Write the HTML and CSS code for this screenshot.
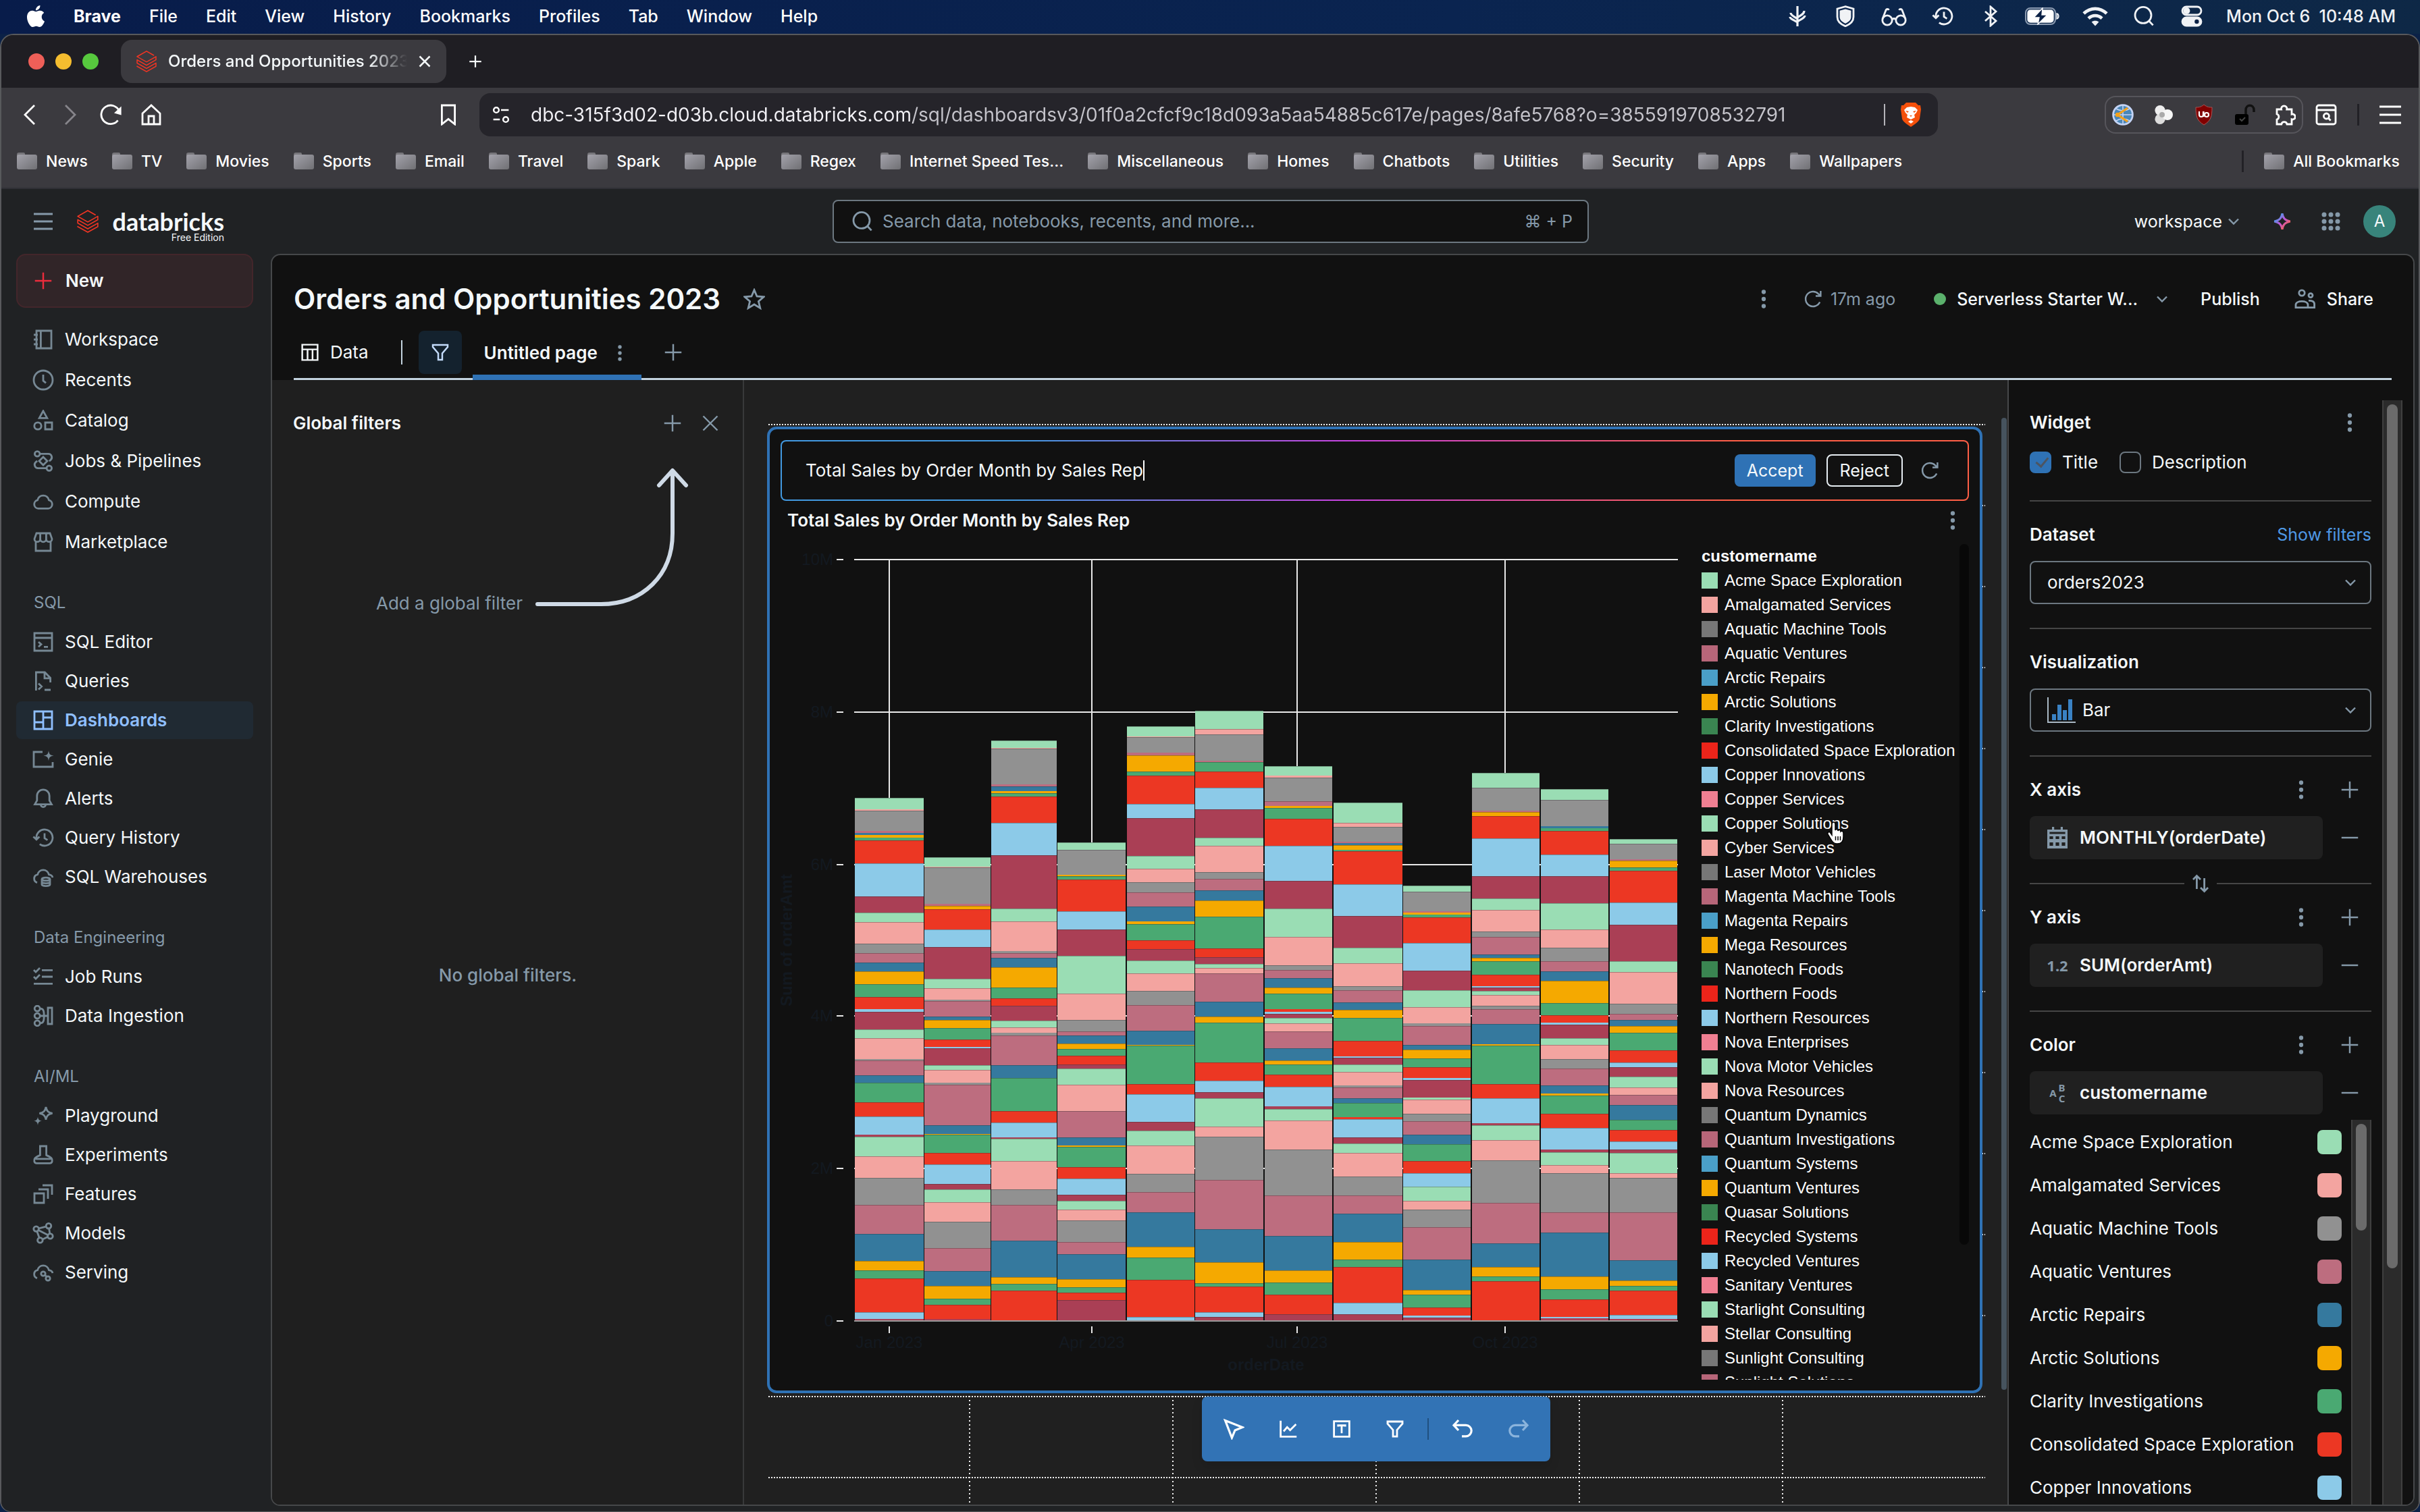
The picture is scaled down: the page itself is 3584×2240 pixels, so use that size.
FILE: index.html
```html
<!DOCTYPE html>
<html lang="en">
<head>
<meta charset="utf-8">
<title>Orders and Opportunities 2023</title>
<link rel="stylesheet" href="styles.css">
</head>
<body>
<svg class="sprite" aria-hidden="true">
  <defs>
    <linearGradient id="folderFill" x1="0" y1="0" x2="1" y2="1"><stop offset="0" stop-color="#a3a2ab"/><stop offset="1" stop-color="#707074"/></linearGradient>
    <linearGradient id="sparkFill" x1="0" y1="0" x2="1" y2="1"><stop offset="0.2" stop-color="#4a9be8"/><stop offset="0.5" stop-color="#c252d8"/><stop offset="0.8" stop-color="#f5655a"/></linearGradient>
    <symbol id="databricks" viewBox="0 0 24 24"><path fill="#ee3524" d="M.95 14.184L12 20.403l9.919-5.55v2.21L12 22.662l-10.484-5.96-.565.308v.77L12 24l11.05-6.218v-4.317l-.515-.309L12 19.118l-9.867-5.653v-2.21L12 16.805l11.05-6.218V6.32l-.515-.308L12 11.974 2.647 6.681 12 1.388l7.76 4.368.668-.411v-.566L12 0 .95 6.27v.72L12 13.207l9.919-5.55v2.26L12 15.52 1.516 9.56l-.565.308Z"/></symbol>
    <symbol id="folder" viewBox="0 0 30 26"><path d="M0 3a3 3 0 0 1 3-3h7a2 2 0 0 1 2 2v3H0z" fill="#77767b"/><rect y="3" width="30" height="22" rx="3" fill="url(#folderFill)"/></symbol>
    <symbol id="plus" viewBox="0 0 16 16"><path d="M8 1v14M1 8h14"/></symbol>
    <symbol id="minus" viewBox="0 0 16 16"><path d="M1 8h14"/></symbol>
    <symbol id="close" viewBox="0 0 16 16"><path d="M2 2l12 12M14 2L2 14"/></symbol>
    <symbol id="chevron" viewBox="0 0 16 16"><path d="M4 6l4 4 4-4"/></symbol>
    <symbol id="kebab" viewBox="0 0 16 16"><g fill="currentColor" stroke="none"><circle cx="8" cy="2" r="1.8"/><circle cx="8" cy="8" r="1.8"/><circle cx="8" cy="14" r="1.8"/></g></symbol>
    <symbol id="refresh" viewBox="0 0 16 16"><path d="M13.8 10.6A6.3 6.3 0 1 1 12.6 3.6L14.3 5.2M14.5 1.2v4.2h-4.2"/></symbol>
    <symbol id="funnel" viewBox="0 0 16 16"><path d="M1.7 1.7h12.6v1.8L9.7 8.8v5.5H6.3V8.8L1.7 3.5z"/></symbol>
    <symbol id="search" viewBox="0 0 16 16"><circle cx="7.5" cy="7.2" r="6"/><path d="M11.8 11.5l3 3.2"/></symbol>
    <symbol id="history" viewBox="0 0 16 16"><path d="M3 8.6a6 6 0 1 1 2.4 4.2M.7 7.2L3 9.4l2.2-2.2M9 4.8v3.6l2.2 1.4"/></symbol>
    <symbol id="sparkle" viewBox="0 0 16 16"><path d="M8 1.3C8.7 5.2 10 7 14.7 8 10 9 8.7 10.8 8 14.7 7.3 10.8 6 9 1.3 8 6 7 7.3 5.200 8 1.300z"/></symbol>
    <symbol id="notebook" viewBox="0 0 16 16"><path d="M3 1.500h11v13H3zM6.200 1.500v13M1 4.500h3M1 8h3M1 11.500h3"/></symbol>
    <symbol id="clock" viewBox="0 0 16 16"><circle cx="8" cy="8" r="7"/><path d="M8 4v4.500l2 1.700"/></symbol>
    <symbol id="shapes" viewBox="0 0 16 16"><path d="M8 .9l2.900 5.300H5.100zM9.500 9.500h5v5h-5z"/><circle cx="4" cy="12" r="2.600"/></symbol>
    <symbol id="pipeline" viewBox="0 0 16 16"><circle cx="3.600" cy="2.700" r="1.900"/><circle cx="12.400" cy="13.300" r="1.900"/><path d="M5.500 2.700h6a2.600 2.600 0 0 1 1.900 4.600l-1 .8M10.500 13.300h-6a2.600 2.600 0 0 1-1.900-4.600l1-.8M8 5l3 3-3 3-3-3z"/></symbol>
    <symbol id="cloud" viewBox="0 0 16 16"><path d="M4.300 13.200a3.200 3.200 0 0 1-.5-6.300 4.300 4.300 0 0 1 8.400 0 3.200 3.200 0 0 1-.5 6.300z"/></symbol>
    <symbol id="store" viewBox="0 0 16 16"><path d="M2.500 8v6.500h11V8M3 1.500h10l1.500 4.200a2.100 2.100 0 0 1-4.300 0 2.200 2.200 0 0 1-4.400 0 2.100 2.100 0 0 1-4.300 0zM5.800 1.500v4.200M10.200 1.500v4.200"/></symbol>
    <symbol id="editor" viewBox="0 0 16 16"><path d="M1.500 1.500h13v13h-13zM1.500 5h13M4.500 8l2 1.800-2 1.800M8.500 11.700h3"/></symbol>
    <symbol id="query" viewBox="0 0 16 16"><path d="M2.700 15V1.500h6.500l4.100 4.200V9M9 1.500v4.400h4.300M4.500 9.800l2.300 2.200-2.300 2.200M9 14.500h4.500"/></symbol>
    <symbol id="board" viewBox="0 0 16 16"><path d="M1.500 1.500h13v13h-13zM8 1.500v13M1.500 9.500H8M8 6h6.500"/></symbol>
    <symbol id="genie" viewBox="0 0 16 16"><path d="M7.500 2.500H1v11h14v-3.500"/><path fill="currentColor" stroke="none" d="M12 1.500c.4 2.700 1 3.300 3.800 3.800-2.800.5-3.400 1.100-3.800 3.800-.4-2.700-1-3.300-3.800-3.800 2.800-.5 3.400-1.100 3.800-3.800z"/></symbol>
    <symbol id="bell" viewBox="0 0 16 16"><path d="M1.800 12.300h12.400L12.600 9.500V6a4.600 4.600 0 0 0-9.200 0v3.500zM6.200 12.500a1.800 1.800 0 0 0 3.600 0"/></symbol>
    <symbol id="warehouse" viewBox="0 0 16 16"><path d="M3.500 12.300a3.100 3.100 0 0 1 .3-6 4.300 4.300 0 0 1 8.400 0c1.500.2 2.600 1 2.700 2.300M7 9.800v4c0 1.300 6 1.300 6 0v-4M7 11.800c0 1.300 6 1.300 6 0"/><ellipse cx="10" cy="9.700" rx="3" ry="1.100"/></symbol>
    <symbol id="checklist" viewBox="0 0 16 16"><path d="M7 3.200h8M7 8h8M1 13.200h14M1 3l1.500 1.500L5.500 1.500M1 8l1.500 1.500 3-3"/></symbol>
    <symbol id="ingest" viewBox="0 0 16 16"><circle cx="3.600" cy="2.600" r="2"/><circle cx="3.600" cy="8" r="2"/><circle cx="3.600" cy="13.400" r="2"/><path d="M5.600 2.600c2.500 0 3 1.500 3 5.400s-.5 5.400-3 5.400M5.600 8h5.900M11.500 8V2h3v12h-3z"/></symbol>
    <symbol id="sparkles" viewBox="0 0 16 16"><path d="M10 1.500c.6 3 1.600 4.100 4.800 4.700-3.200.6-4.200 1.700-4.800 4.700-.6-3-1.600-4.100-4.800-4.700C8.400 5.600 9.400 4.500 10 1.500z"/><path fill="currentColor" stroke="none" d="M4 8.700c.3 2 .9 2.700 3 3.100-2.100.4-2.700 1.100-3 3.200-.3-2.100-.9-2.800-3-3.200 2.100-.4 2.700-1.100 3-3.100z"/></symbol>
    <symbol id="flask" viewBox="0 0 16 16"><path d="M5.700 1.500h4.600v6.700c3.900 1.700 4.700 2.600 4.300 4.600-.2 1-.9 1.400-1.800 1.400H3.200c-.9 0-1.600-.4-1.800-1.400-.4-2 .4-2.900 4.300-4.600zM2.200 10.900h11.600"/></symbol>
    <symbol id="layers" viewBox="0 0 16 16"><path d="M1.500 7.500h7v7h-7zM4.500 4.500h7v7M7.500 1.500h7v7"/></symbol>
    <symbol id="graph" viewBox="0 0 16 16"><circle cx="2.800" cy="4.800" r="1.900"/><circle cx="12" cy="2.600" r="1.900"/><circle cx="13.200" cy="10.200" r="1.900"/><circle cx="5.700" cy="13.200" r="1.900"/><path d="M4.700 4.400l5.400-1.300M12.300 4.500l.6 3.800M11.300 10.800l-3.700 1.700M3.400 6.600l1.700 4.800M4.500 5.700l7.100 3.700"/></symbol>
    <symbol id="serving" viewBox="0 0 16 16"><path d="M3.500 12.300a3.100 3.100 0 0 1 .3-6 4.300 4.300 0 0 1 8.400 0c1.500.2 2.600 1 2.700 2.300M9.300 10l1.200 1.200"/><circle cx="8" cy="9" r="1.600"/><circle cx="11.500" cy="12.500" r="1.600"/></symbol>
    <symbol id="table" viewBox="0 0 16 16"><path d="M1.500 1.500h13v13h-13zM1.500 5.500h13M6 5.500v9M10.200 5.500v9"/></symbol>
    <symbol id="star" viewBox="0 0 16 16"><path d="M8 1.300l2 4.700 5 .4-3.800 3.300 1.200 5L8 12l-4.400 2.700 1.200-5L1 6.400 6 6z"/></symbol>
    <symbol id="people" viewBox="0 0 16 16"><circle cx="5.500" cy="3.500" r="2.100"/><circle cx="12" cy="5.300" r="1.500"/><path d="M1 14.300v-2c0-3.500 9-3.500 9 0v2zM10.500 9.200c2.200-.2 4.300.6 4.300 2.600v2.500H10"/></symbol>
    <symbol id="calendar" viewBox="0 0 16 16"><path fill="currentColor" stroke="none" fill-rule="evenodd" d="M4 0h1.600v2h4.800V0H12v2h3.500v14H.5V2H4zM2.200 7v2h2.600V7zm4.500 0v2h2.600V7zm4.500 0v2h2.600V7zm-9 4.500v2.500h2.600v-2.500zm4.500 0v2.500h2.600v-2.500zm4.500 0v2.500h2.600v-2.500zM2.200 3.700v1.600h11.600V3.700z"/></symbol>
    <symbol id="swap" viewBox="0 0 16 16"><path d="M5.200 12V2.300M2.500 5l2.700-2.800L8 5M10.800 4v9.700M8 11l2.800 2.800L13.500 11"/></symbol>
    <symbol id="puzzle" viewBox="0 0 16 16"><path d="M2 4h3.300a2.100 2.100 0 1 1 4.100 0H13v3.600a2 2 0 1 1 0 3.800V15H9.500a2.100 2.100 0 0 0-4.100 0H2v-3.500a2.100 2.100 0 0 0 0-4z"/></symbol>
  </defs>
</svg>

<header class="menubar">
  <nav class="menus">
    <svg class="apple" viewBox="0 0 24 24"><path fill="#fff" d="M12.152 6.896c-.948 0-2.415-1.078-3.960-1.040-2.040.027-3.910 1.183-4.961 3.014-2.117 3.675-.546 9.103 1.519 12.090 1.013 1.454 2.208 3.090 3.792 3.039 1.520-.065 2.090-.987 3.935-.987 1.831 0 2.350.987 3.960.948 1.637-.026 2.676-1.480 3.676-2.948 1.156-1.688 1.636-3.325 1.662-3.415-.039-.013-3.182-1.221-3.220-4.857-.026-3.040 2.480-4.494 2.597-4.559-1.429-2.090-3.623-2.324-4.390-2.376-2-.156-3.675 1.090-4.610 1.090zM15.530 3.830c.843-1.012 1.400-2.427 1.245-3.830-1.207.052-2.662.805-3.532 1.818-.780.896-1.454 2.338-1.273 3.714 1.338.104 2.715-.688 3.559-1.701"/></svg>
    <b>Brave</b><span>File</span><span>Edit</span><span>View</span><span>History</span><span>Bookmarks</span><span>Profiles</span><span>Tab</span><span>Window</span><span>Help</span>
  </nav>
  <div class="status">
    <svg class="icon" viewBox="0 0 16 16"><path stroke-width="1.600" d="M8 .5v15M3 5.500c0 2 2.500 2.500 5 4.500M13 4c0 2.500-2.500 3-5 5M2.500 8.500c0 1.700 3 2.200 5.500 4M13.500 7.500c0 2-3 2.500-5.500 4.500"/></svg>
    <svg class="icon" viewBox="0 0 16 16"><path d="M8 .8l6 1.700v6c0 3.500-3 5.700-6 6.900-3-1.200-6-3.400-6-6.900v-6z"/><path fill="currentColor" stroke="none" d="M8 2.800l4.200 1.100v4.600c0 2.400-2 3.900-4.200 4.900-2.200-1-4.200-2.500-4.200-4.900V3.900z"/></svg>
    <svg class="icon wide" viewBox="0 0 20 16"><circle cx="5" cy="11" r="3.600"/><circle cx="15" cy="11" r="3.600"/><path d="M8.600 10.500c.6-1 2.200-1 2.800 0M1.500 10L4 3.500c.5-1 1.800-1 2.200 0M18.500 10L16 3.500c-.5-1-1.800-1-2.200 0"/></svg>
    <svg class="icon"><use href="#history"/></svg>
    <svg class="icon" viewBox="0 0 16 16"><path d="M4 4.500l8 7-4 3.500V1l4 3.500-8 7"/></svg>
    <svg class="battery" viewBox="0 0 52 26"><rect x="1" y="1" width="44" height="24" rx="7" fill="none" stroke="#8b9ab0" stroke-width="2"/><rect x="4" y="4" width="38" height="18" rx="4" fill="#fff"/><path d="M47 9c4 1 4 7 0 8z" fill="#8b9ab0"/><path d="M26 1L13 15h8l-2 10 14-14h-8z" fill="#0c2246" stroke="#fff"/></svg>
    <svg class="icon wide" viewBox="0 0 20 16"><g fill="none" stroke-width="2.400"><path d="M1.500 6c5-4.800 12-4.800 17 0M5 9.600c3-2.700 7-2.700 10 0"/></g><path fill="currentColor" stroke="none" d="M10 15.300l-2.700-3c1.500-1.300 3.900-1.300 5.400 0z"/></svg>
    <svg class="icon"><use href="#search"/></svg>
    <svg class="icon" viewBox="0 0 16 16"><rect x="1" y="1" width="14" height="6" rx="3"/><circle cx="4.200" cy="4" r="1.800" fill="currentColor"/><rect x="1" y="9" width="14" height="6" rx="3" fill="currentColor"/><circle cx="11.700" cy="12" r="1.600" fill="#0c2246" stroke="none"/></svg>
    <time>Mon Oct 6&nbsp; 10:48 AM</time>
  </div>
</header>

<div class="window">
  <div class="tabstrip">
    <div class="lights"><i class="red"></i><i class="yellow"></i><i class="green"></i></div>
    <div class="browser-tab"><svg class="favicon"><use href="#databricks"/></svg><span class="tab-title">Orders and Opportunities 2023</span><svg class="tiny-x"><use href="#close"/></svg></div>
    <button class="bare new-tab" aria-label="New tab"><svg class="glyph20"><use href="#plus"/></svg></button>
  </div>
  <div class="toolbar">
    <div class="nav-buttons">
      <button class="bare" aria-label="Back"><svg class="icon" viewBox="0 0 16 16"><path d="M11.500 1L4.500 8l7 7"/></svg></button>
      <button class="bare dim" aria-label="Forward"><svg class="icon" viewBox="0 0 16 16"><path d="M4.500 1l7 7-7 7"/></svg></button>
      <button class="bare" aria-label="Reload"><svg class="icon" viewBox="0 0 16 16"><path d="M13.300 12.200A6.900 6.900 0 1 1 14.300 5.400"/><path fill="currentColor" stroke="none" d="M15.800 1.800v6.400L10.500 6.800z"/></svg></button>
      <button class="bare" aria-label="Home"><svg class="icon" viewBox="0 0 16 16"><path d="M1.500 7L8 1l6.500 6v8h-13zM6 15V9h4v6"/></svg></button>
    </div>
    <button class="bare mark" aria-label="Bookmark"><svg class="icon" viewBox="0 0 16 16"><path d="M3.200 1h9.600v14L8 11.200 3.200 15z"/></svg></button>
    <div class="urlbar">
      <svg class="glyph28" viewBox="0 0 16 16"><circle cx="4" cy="4" r="2.200"/><path d="M8 4h6.500M1.500 12H7"/><circle cx="12" cy="12" r="2.200"/></svg>
      <input class="url" aria-label="Address" value="dbc-315f3d02-d03b.cloud.databricks.com/sql/dashboardsv3/01f0a2cfcf9c18d093a5aa54885c617e/pages/8afe5768?o=3855919708532791">
      <i class="url-rule"></i>
      <svg class="brave" viewBox="0 0 32 36"><path fill="#f4500b" d="M9 0h14l4 4 3 0 1 6-2 14c-1 4-7 8-13 12C10 32 4 28 3 24L1 10l1-6 3 0z"/><path fill="#fff" d="M16 6l6 1 4 4-2 4-3 3 1 4-6 3-6-3 1-4-3-3-2-4 4-4zM16 26l4 2-4 3-4-3z"/><path fill="#f4500b" d="M8 12l5 1-2 2zM24 12l-5 1 2 2zM14 19h4l-2 2z"/></svg>
    </div>
    <div class="extensions">
      <svg class="glyph32" viewBox="0 0 16 16"><circle cx="8" cy="8" r="7.200" fill="#4b87b8" stroke="#c4d4f5"/><path d="M8 1v14M1 8h14M3 3.500c3 2 7 2 10 0M3 12.500c3-2 7-2 10 0" stroke="#c4d4f5" stroke-width=".8"/><path d="M11.500 3L4 8l7.500 5" stroke="#f5a21b" stroke-width="1.600"/><circle cx="4" cy="8" r="1.600" fill="#f5a21b" stroke="none"/></svg>
      <svg class="glyph32" viewBox="0 0 16 16"><g stroke="none"><circle cx="5.500" cy="4.800" r="3.800" fill="#eee"/><circle cx="5.500" cy="11.200" r="3.800" fill="#ddd"/><circle cx="11" cy="8" r="4" fill="#f6f6f6"/><circle cx="7" cy="8" r="2" fill="#aaa"/></g></svg>
      <svg class="glyph32" viewBox="0 0 32 32"><path fill="#800000" stroke="#a55" stroke-width="1" d="M16 1c5 4 8 4 12 4 0 14-2 20-12 26C6 25 4 19 4 5c4 0 7 0 12-4z"/><path stroke="#fff" stroke-width="2.200" d="M9 11v5a3 3 0 0 0 6 0v-5M15.500 11v8"/><circle cx="20" cy="16" r="3" stroke="#fff" stroke-width="2.200"/></svg>
      <svg class="glyph32" viewBox="0 0 32 32"><rect x="2" y="15" width="20" height="16" rx="3" fill="#000" stroke="none"/><path stroke="#111" stroke-width="3.500" d="M18 15V9c0-9 12-9 12 0v3"/><path stroke="#444" stroke-width="2" d="M9 22l3 3 5-5"/></svg>
      <svg class="glyph32"><use href="#puzzle"/></svg>
    </div>
    <svg class="glyph32 sidepanel" viewBox="0 0 16 16"><rect x="1" y="1" width="14" height="14" rx="1.500"/><path d="M1 4.500h14"/><circle cx="8.200" cy="9" r="2"/><path d="M9.700 10.500l1.600 1.800"/></svg>
    <i class="bar-rule"></i>
    <button class="bare" aria-label="Menu"><svg class="glyph32" viewBox="0 0 16 16"><path d="M0 2h16M0 8h16M0 14h16"/></svg></button>
  </div>
  <nav class="bookmarks">
    <a href="#"><svg class="folder"><use href="#folder"/></svg>News</a>
    <a href="#"><svg class="folder"><use href="#folder"/></svg>TV</a>
    <a href="#"><svg class="folder"><use href="#folder"/></svg>Movies</a>
    <a href="#"><svg class="folder"><use href="#folder"/></svg>Sports</a>
    <a href="#"><svg class="folder"><use href="#folder"/></svg>Email</a>
    <a href="#"><svg class="folder"><use href="#folder"/></svg>Travel</a>
    <a href="#"><svg class="folder"><use href="#folder"/></svg>Spark</a>
    <a href="#"><svg class="folder"><use href="#folder"/></svg>Apple</a>
    <a href="#"><svg class="folder"><use href="#folder"/></svg>Regex</a>
    <a href="#"><svg class="folder"><use href="#folder"/></svg>Internet Speed Tes...</a>
    <a href="#"><svg class="folder"><use href="#folder"/></svg>Miscellaneous</a>
    <a href="#"><svg class="folder"><use href="#folder"/></svg>Homes</a>
    <a href="#"><svg class="folder"><use href="#folder"/></svg>Chatbots</a>
    <a href="#"><svg class="folder"><use href="#folder"/></svg>Utilities</a>
    <a href="#"><svg class="folder"><use href="#folder"/></svg>Security</a>
    <a href="#"><svg class="folder"><use href="#folder"/></svg>Apps</a>
    <a href="#"><svg class="folder"><use href="#folder"/></svg>Wallpapers</a>
    <i class="bar-rule push"></i>
    <a href="#"><svg class="folder"><use href="#folder"/></svg>All Bookmarks</a>
  </nav>

  <div class="app">
    <header class="topbar">
      <div class="brand">
        <button class="bare muted" aria-label="Toggle menu"><svg class="burger" viewBox="0 0 28 26"><path stroke-width="3" d="M0 2h28M0 13h28M0 24h28"/></svg></button>
        <svg class="logo"><use href="#databricks"/></svg>
        <div class="wordmark"><span>databricks</span><small>Free Edition</small></div>
      </div>
      <label class="search"><svg class="icon"><use href="#search"/></svg><input type="search" placeholder="Search data, notebooks, recents, and more..." aria-label="Search"><kbd>⌘ + P</kbd></label>
      <div class="account">
        <button class="bare workspace">workspace<svg class="glyph28 muted"><use href="#chevron"/></svg></button>
        <svg class="glyph28 assistant"><use href="#sparkle"/></svg>
        <svg class="glyph28 muted" viewBox="0 0 28 28"><g fill="currentColor" stroke="none"><circle cx="4" cy="4" r="3.500"/><circle cx="14" cy="4" r="3.500"/><circle cx="24" cy="4" r="3.500"/><circle cx="4" cy="14" r="3.500"/><circle cx="14" cy="14" r="3.500"/><circle cx="24" cy="14" r="3.500"/><circle cx="4" cy="24" r="3.500"/><circle cx="14" cy="24" r="3.500"/><circle cx="24" cy="24" r="3.500"/></g></svg>
        <span class="avatar">A</span>
      </div>
    </header>

    <div class="body">
      <nav class="sidebar">
        <button class="new"><svg class="glyph28"><use href="#plus"/></svg>New</button>
        <div class="group roomy">
          <a href="#"><svg class="icon"><use href="#notebook"/></svg>Workspace</a>
          <a href="#"><svg class="icon"><use href="#clock"/></svg>Recents</a>
          <a href="#"><svg class="icon"><use href="#shapes"/></svg>Catalog</a>
          <a href="#"><svg class="icon"><use href="#pipeline"/></svg>Jobs &amp; Pipelines</a>
          <a href="#"><svg class="icon"><use href="#cloud"/></svg>Compute</a>
          <a href="#"><svg class="icon"><use href="#store"/></svg>Marketplace</a>
        </div>
        <div class="group">
          <h2>SQL</h2>
          <a href="#"><svg class="icon"><use href="#editor"/></svg>SQL Editor</a>
          <a href="#"><svg class="icon"><use href="#query"/></svg>Queries</a>
          <a href="#" class="current"><svg class="icon"><use href="#board"/></svg>Dashboards</a>
          <a href="#"><svg class="icon"><use href="#genie"/></svg>Genie</a>
          <a href="#"><svg class="icon"><use href="#bell"/></svg>Alerts</a>
          <a href="#"><svg class="icon"><use href="#history"/></svg>Query History</a>
          <a href="#"><svg class="icon"><use href="#warehouse"/></svg>SQL Warehouses</a>
        </div>
        <div class="group">
          <h2>Data Engineering</h2>
          <a href="#"><svg class="icon"><use href="#checklist"/></svg>Job Runs</a>
          <a href="#"><svg class="icon"><use href="#ingest"/></svg>Data Ingestion</a>
        </div>
        <div class="group">
          <h2>AI/ML</h2>
          <a href="#"><svg class="icon"><use href="#sparkles"/></svg>Playground</a>
          <a href="#"><svg class="icon"><use href="#flask"/></svg>Experiments</a>
          <a href="#"><svg class="icon"><use href="#layers"/></svg>Features</a>
          <a href="#"><svg class="icon"><use href="#graph"/></svg>Models</a>
          <a href="#"><svg class="icon"><use href="#serving"/></svg>Serving</a>
        </div>
      </nav>

      <main class="page">
        <div class="page-head">
          <div class="title-row">
            <h1>Orders and Opportunities 2023</h1>
            <svg class="icon muted"><use href="#star"/></svg>
            <div class="actions">
              <button class="bare muted" aria-label="More"><svg class="glyph28"><use href="#kebab"/></svg></button>
              <button class="bare muted refresh"><svg class="glyph28"><use href="#refresh"/></svg>17m ago</button>
              <button class="bare compute"><i></i>Serverless Starter W...<svg class="glyph28 muted"><use href="#chevron"/></svg></button>
              <button class="bare">Publish</button>
              <button class="bare share"><svg class="icon muted"><use href="#people"/></svg>Share</button>
            </div>
          </div>
          <div class="tabs">
            <button class="bare data-tab"><svg class="glyph28"><use href="#table"/></svg>Data</button>
            <i class="tab-rule"></i>
            <button class="bare filter-tab" aria-label="Global filters"><svg class="glyph28"><use href="#funnel"/></svg></button>
            <button class="bare page-tab">Untitled page<svg class="glyph24 muted"><use href="#kebab"/></svg></button>
            <button class="bare muted add-tab" aria-label="Add page"><svg class="glyph28"><use href="#plus"/></svg></button>
          </div>
        </div>

        <div class="panes">
          <aside class="filters">
            <div class="filters-head"><h2>Global filters</h2><button class="bare muted" aria-label="Add filter"><svg class="glyph28"><use href="#plus"/></svg></button><button class="bare muted" aria-label="Close"><svg class="glyph28"><use href="#close"/></svg></button></div>
            <div class="hint"><span>Add a global filter</span><svg viewBox="0 0 230 210"><path d="M4 203H98C160 203 204 160 204 98V6M184 27L204 5 224 27"/></svg></div>
            <p>No global filters.</p>
          </aside>

          <section class="canvas">
            <svg class="grid"><defs><pattern id="cells" x="32" y="65" width="301" height="120" patternUnits="userSpaceOnUse"><path d="M0 1H301" stroke-dasharray="2 2"/><path d="M1 0V120" stroke-dasharray="2 4"/></pattern></defs><rect x="34" y="65" width="1804" height="100%" fill="url(#cells)"/></svg>
            <article class="widget">
              <form class="assist">
                <input class="prompt" aria-label="Title" value="Total Sales by Order Month by Sales Rep"><i class="caret"></i>
                <button type="button" class="accept">Accept</button>
                <button type="button" class="reject">Reject</button>
                <button type="button" class="bare muted" aria-label="Regenerate"><svg class="glyph28"><use href="#refresh"/></svg></button>
              </form>
              <div class="widget-title"><h3>Total Sales by Order Month by Sales Rep</h3><button class="bare muted" aria-label="Widget menu"><svg class="glyph28"><use href="#kebab"/></svg></button></div>
              <div class="viz">
                <svg id="chart" class="chart" viewBox="0 0 1364 1256"></svg>
                <div class="legend">
                  <h4>customername</h4>
                  <ul>
                    <li>Acme Space Exploration</li><li>Amalgamated Services</li><li>Aquatic Machine Tools</li><li>Aquatic Ventures</li><li>Arctic Repairs</li><li>Arctic Solutions</li><li>Clarity Investigations</li><li>Consolidated Space Exploration</li><li>Copper Innovations</li><li>Copper Services</li>
                    <li>Copper Solutions</li><li>Cyber Services</li><li>Laser Motor Vehicles</li><li>Magenta Machine Tools</li><li>Magenta Repairs</li><li>Mega Resources</li><li>Nanotech Foods</li><li>Northern Foods</li><li>Northern Resources</li><li>Nova Enterprises</li>
                    <li>Nova Motor Vehicles</li><li>Nova Resources</li><li>Quantum Dynamics</li><li>Quantum Investigations</li><li>Quantum Systems</li><li>Quantum Ventures</li><li>Quasar Solutions</li><li>Recycled Systems</li><li>Recycled Ventures</li><li>Sanitary Ventures</li>
                    <li>Starlight Consulting</li><li>Stellar Consulting</li><li>Sunlight Consulting</li><li>Sunlight Solutions</li>
                  </ul>
                  <i class="legend-scroll"></i>
                  <svg class="pointer" viewBox="0 0 30 36"><path fill="#fff" stroke="#000" stroke-width="1.500" d="M9 21V5c0-4 5-4 5 0v9c1-2 4-2 4 1 1-2 4-2 4 1 1-1 4-1 4 2v6c0 7-3 10-9 10-5 0-7-2-9-6l-5-8c-1-3 2-5 4-2z"/><path stroke="#000" stroke-width="1.500" d="M14.500 23v6M18 23v6M21.500 23v6"/></svg>
                </div>
              </div>
            </article>
            <i class="canvas-scroll"></i>
            <div class="dock">
              <button class="bare" aria-label="Select"><svg class="icon" viewBox="0 0 16 16"><path d="M1.800 1.800l12.700 5L9 9l-2.300 5.500z"/></svg></button>
              <button class="bare" aria-label="Add visualization"><svg class="glyph28" viewBox="0 0 16 16"><path d="M1.500 1v13.500H15M4 10l3-3.500 2.500 2.500L14.500 4"/></svg></button>
              <button class="bare" aria-label="Add text"><svg class="glyph28" viewBox="0 0 16 16"><path d="M1.500 1.500h13v13h-13zM5 6V5h6v1M8 5v6.500"/></svg></button>
              <button class="bare" aria-label="Add filter"><svg class="glyph28"><use href="#funnel"/></svg></button>
              <i></i>
              <button class="bare" aria-label="Undo"><svg class="icon" viewBox="0 0 16 16"><path d="M5 1.500L1.500 5.200 5 9M2 5.200h8.500a4 4 0 0 1 0 8.200H7.500"/></svg></button>
              <button class="bare faded" aria-label="Redo"><svg class="icon" viewBox="0 0 16 16"><path d="M11 1.500l3.500 3.700L11 9M14 5.200H5.500a4 4 0 0 0 0 8.200h3"/></svg></button>
            </div>
          </section>

          <aside class="config">
            <div class="config-main">
              <section>
                <div class="row"><h2>Widget</h2><button class="bare muted" aria-label="More"><svg class="glyph28"><use href="#kebab"/></svg></button></div>
                <div class="checks"><label><input type="checkbox" checked>Title</label><label><input type="checkbox">Description</label></div>
              </section>
              <section>
                <div class="row link-row"><h2>Dataset</h2><a href="#">Show filters</a></div>
                <div class="select"><select aria-label="Dataset"><option>orders2023</option></select><svg class="glyph28 muted"><use href="#chevron"/></svg></div>
              </section>
              <section>
                <div class="row"><h2>Visualization</h2></div>
                <div class="select with-icon"><svg class="bar-icon" viewBox="0 0 42 38"><path stroke="#a9b8c4" stroke-width="2" d="M1 0v37h41"/><path stroke="none" fill="#3a82c4" d="M7 25h6v9H7zM15 11h6v23h-6zM23 19h6v15h-6zM31 3h6v31h-6z"/></svg><select aria-label="Visualization"><option>Bar</option></select><svg class="glyph28 muted"><use href="#chevron"/></svg></div>
              </section>
              <section>
                <div class="row"><h2>X axis</h2><button class="bare muted" aria-label="More"><svg class="glyph28"><use href="#kebab"/></svg></button><button class="bare muted" aria-label="Add"><svg class="glyph28"><use href="#plus"/></svg></button></div>
                <div class="field"><button class="pill"><svg class="icon muted"><use href="#calendar"/></svg>MONTHLY(orderDate)</button><button class="bare muted" aria-label="Remove"><svg class="glyph28"><use href="#minus"/></svg></button></div>
                <span class="swap muted"><svg class="icon"><use href="#swap"/></svg></span>
              </section>
              <section>
                <div class="row"><h2>Y axis</h2><button class="bare muted" aria-label="More"><svg class="glyph28"><use href="#kebab"/></svg></button><button class="bare muted" aria-label="Add"><svg class="glyph28"><use href="#plus"/></svg></button></div>
                <div class="field"><button class="pill"><span class="num muted">1.2</span>SUM(orderAmt)</button><button class="bare muted" aria-label="Remove"><svg class="glyph28"><use href="#minus"/></svg></button></div>
              </section>
              <section class="last">
                <div class="row"><h2>Color</h2><button class="bare muted" aria-label="More"><svg class="glyph28"><use href="#kebab"/></svg></button><button class="bare muted" aria-label="Add"><svg class="glyph28"><use href="#plus"/></svg></button></div>
                <div class="field"><button class="pill"><span class="abc muted"><span>A</span><span>B</span><span>C</span></span>customername</button><button class="bare muted" aria-label="Remove"><svg class="glyph28"><use href="#minus"/></svg></button></div>
                <div class="colors">
                  <ul><li>Acme Space Exploration<i></i></li><li>Amalgamated Services<i></i></li><li>Aquatic Machine Tools<i></i></li><li>Aquatic Ventures<i></i></li><li>Arctic Repairs<i></i></li><li>Arctic Solutions<i></i></li><li>Clarity Investigations<i></i></li><li>Consolidated Space Exploration<i></i></li><li>Copper Innovations<i></i></li></ul>
                  <div class="track short"><i></i></div>
                </div>
              </section>
            </div>
            <div class="track"><i></i></div>
          </aside>
        </div>
      </main>
    </div>
  </div>
</div>
<script src="chart.js"></script>
</body>
</html>
```
FILE: styles.css
```css
* { box-sizing: border-box; }
body { margin: 0; height: 100vh; display: flex; flex-direction: column; overflow: hidden; background: #0b2147; color: #f4f8fa; font: 400 26px/32px Inter, "Noto Sans", sans-serif; }
h1, h2, h3, h4, p, ul { margin: 0; padding: 0; font-size: inherit; }
h1, h2, h3 { font-weight: 600; }
ul { list-style: none; }
a { color: inherit; text-decoration: none; }
i { display: block; flex: none; }
svg { display: block; flex: none; fill: none; stroke: currentColor; stroke-width: 1.4; }
button, input, select { font: inherit; color: inherit; }
input { border: 0; background: none; padding: 0; outline: 0; }
.bare { display: flex; align-items: center; border: 0; background: none; padding: 0; }
.sprite { position: absolute; width: 0; height: 0; }
.icon, .glyph32 { width: 32px; height: 32px; }
.glyph28 { width: 28px; height: 28px; }
.glyph24 { width: 24px; height: 24px; }
.glyph20 { width: 20px; height: 20px; }
.muted { color: #8599a9; }

/* System menu bar */
.menubar { flex: none; height: 50px; padding: 0 36px 2px; display: flex; justify-content: space-between; align-items: center; background: linear-gradient(90deg, #081c4a, #0a2450 60%, #0e2846); color: #fff; font-size: 25px; font-weight: 500; }
.menus { display: flex; align-items: center; gap: 42px; }
.menus b { font-weight: 700; }
.menus .apple { margin-right: -3px; }
.apple { width: 34px; height: 32px; stroke: none; }
.status { display: flex; align-items: center; gap: 39px; color: #f0f2f5; }
.wide { width: 40px; }
.status .wide { margin: 0 -3px; }
.battery { width: 52px; height: 26px; margin: 0 -4px; }
.status time { margin-left: -4px; }

/* Browser chrome */
.window { flex: 1; min-height: 0; display: flex; flex-direction: column; border: 2px solid #58595c; border-bottom-width: 1px; border-radius: 20px 20px 16px 16px; background: #202124; overflow: hidden; }
.tabstrip { flex: none; height: 78px; display: flex; align-items: center; background: #1f1e23; }
.lights { display: flex; gap: 16px; padding: 0 33px 0 40px; }
.lights i { width: 24px; height: 24px; border-radius: 50%; }
.lights .red { background: #ee5f58; }
.lights .yellow { background: #f5bd2f; }
.lights .green { background: #57c93e; }
.browser-tab { width: 482px; height: 64px; padding: 0 22px; display: flex; align-items: center; gap: 16px; border-radius: 16px; background: #3b3a3f; font-weight: 500; }
.favicon { width: 32px; height: 32px; stroke: none; }
.tab-title { flex: 1; overflow: hidden; white-space: nowrap; font-size: 24px; -webkit-mask: linear-gradient(90deg, #000 84%, transparent); mask: linear-gradient(90deg, #000 84%, transparent); }
.tiny-x { width: 20px; height: 20px; stroke-width: 2; }
.new-tab { padding-left: 33px; }
.new-tab svg { stroke-width: 1.8; }
.toolbar { flex: none; height: 80px; display: flex; align-items: center; padding: 0 26px; background: #3b3a3f; color: #fff; }
.nav-buttons { display: flex; gap: 28px; }
.dim { color: #86858b; }
.mark { margin-left: 408px; }
.urlbar { flex: 1; height: 64px; margin: 0 247px 0 30px; padding: 0 24px 0 18px; display: flex; align-items: center; border-radius: 16px; background: #25242a; }
.url { flex: 1; min-width: 0; margin-left: 30px; font-size: 28px; color: transparent; background: linear-gradient(90deg, #f3f2f7 566px, #c5c4cb 566px); -webkit-background-clip: text; background-clip: text; }
.url-rule { width: 2px; height: 32px; margin-right: 22px; background: #b5b4ba; }
.brave { width: 32px; height: 36px; stroke: none; }
.extensions { display: flex; gap: 28px; height: 56px; align-items: center; padding: 0 9px; border: 2px solid #56555b; border-radius: 16px; }
.sidepanel { margin-left: 18px; }
.bar-rule { width: 3px; height: 32px; margin: 0 30px; background: #222126; }
.bookmarks { flex: none; height: 70px; display: flex; align-items: center; gap: 36px; padding: 0 28px 10px 23px; border-bottom: 2px solid #303036; background: #3b3a3f; color: #fff; font-size: 23px; font-weight: 500; white-space: nowrap; }
.bookmarks a { display: flex; align-items: center; gap: 13px; }
.folder { width: 30px; height: 26px; stroke: none; }
.push { margin: 0 -6px 0 auto; }

/* Databricks top bar */
.app { flex: 1; min-height: 0; display: flex; flex-direction: column; background: #202224; }
.topbar { flex: none; height: 96px; display: grid; grid-template-columns: 1fr 1120px 1fr; align-items: center; padding-left: 2px; }
.brand { display: flex; align-items: center; padding-left: 46px; }
.burger { width: 28px; height: 26px; }
.logo { width: 34px; height: 34px; margin: 0 15px 0 35px; stroke: none; }
.wordmark { width: 170px; display: flex; flex-direction: column; align-items: flex-end; padding-top: 16px; font: 700 36px/32px Lato, sans-serif; }
.wordmark small { font: 400 14px/16px Inter, sans-serif; }
.search { height: 64px; display: flex; align-items: center; gap: 14px; padding: 0 22px 0 26px; border: 2px solid #6c7780; border-radius: 8px; background: #111; color: #8599a9; }
.search input { flex: 1; }
.search input::placeholder { color: #8599a9; opacity: 1; }
.search kbd { font: inherit; font-size: 25px; }
.account { display: flex; align-items: center; justify-content: flex-end; padding-right: 34px; }
.workspace { gap: 3px; font-size: 25px; }
.assistant { margin: 0 44px; color: #c252d8; stroke: url(#sparkFill); stroke-width: 1.8; }
.avatar { width: 48px; height: 48px; margin-left: 34px; border-radius: 50%; background: #38847b; text-align: center; line-height: 48px; font-size: 24px; }

/* Sidebar */
.body { flex: 1; min-height: 0; display: flex; padding: 0 6px 8px 0; }
.sidebar { flex: none; width: 399px; padding: 0 26px 0 22px; }
.new { display: flex; align-items: center; gap: 19px; width: 100%; height: 80px; padding: 0 24px; margin-bottom: 19px; border: 2px solid #43262b; border-radius: 14px; background: #312528; font-weight: 600; }
.new svg { color: #ec2c3c; }
.group { display: flex; flex-direction: column; gap: 2px; margin-bottom: 34px; }
.group.roomy { gap: 4px; }
.group h2 { height: 56px; padding-left: 26px; font-size: 24px; font-weight: 400; line-height: 56px; color: #8599a9; }
.group a { display: flex; align-items: center; gap: 16px; height: 56px; padding-left: 24px; border-radius: 8px; }
.group svg { color: #768894; }
.group .current { background: #202a33; color: #8fbfff; font-weight: 600; }
.group .current svg { color: #8fbfff; }

/* Dashboard page */
.page { flex: 1; min-width: 0; display: flex; flex-direction: column; border: 2px solid #46484a; border-radius: 14px; background: #111; overflow: hidden; }
.page-head { flex: none; padding: 25px 32px; padding-bottom: 0; }
.title-row { height: 80px; display: flex; align-items: center; gap: 34px; }
h1 { font-size: 42px; line-height: 48px; }
.actions { flex: 1; display: flex; align-items: center; justify-content: flex-end; padding-right: 27px; font-size: 25px; font-weight: 500; }
.refresh { gap: 12px; margin: 0 57px 0 45px; font-weight: 400; }
.compute { gap: 16px; margin-right: 43px; }
.compute i { width: 18px; height: 18px; border-radius: 50%; background: #5bb16c; }
.compute svg { margin-left: 6px; }
.share { gap: 16px; margin-left: 51px; }
.tabs { height: 80px; display: flex; align-items: center; border-bottom: 3px solid #c3d3df; }
.data-tab { gap: 16px; padding-left: 10px; }
.tab-rule { width: 2px; height: 36px; margin: 0 24px 0 48px; background: #c3d3df; }
.filter-tab { width: 64px; height: 64px; justify-content: center; border-radius: 8px; background: #14222e; color: #c4dcfc; }
.page-tab { align-self: stretch; gap: 21px; margin: 0 33px -3px 16px; padding: 8px 20px 0 17px; border-bottom: 8px solid #2f72b5; font-weight: 600; }
.panes { flex: 1; min-height: 0; display: flex; background: #202020; }

.filters { flex: none; width: 699px; padding: 32px 0 0 31px; border-right: 2px solid #38393a; background: #1f1f1f; }
.filters-head { display: flex; align-items: center; height: 64px; padding-right: 34px; }
.filters-head h2 { flex: 1; }
.filters-head .bare + .bare { margin-left: 28px; }
.hint { display: flex; align-items: flex-end; gap: 18px; margin: 33px 0 0 123px; color: #8599a9; }
.hint span { line-height: 16px; }
.hint svg { width: 230px; height: 210px; color: #cfdae6; stroke-width: 6; stroke-linecap: round; stroke-linejoin: round; }
.filters p { margin-top: 527px; padding-right: 30px; text-align: center; color: #8599a9; font-weight: 500; }

.canvas { flex: 1; min-width: 0; position: relative; padding: 69px 37px 0 34px; }
.grid { position: absolute; inset: 0; width: 100%; height: 100%; }
.grid path { stroke: #f0f0f0; stroke-width: 2; }
.grid rect { stroke: none; }
.widget { position: relative; padding: 16px 16px 8px; border: 4px solid #2f72b5; border-radius: 14px; background: #111; }
.assist { height: 90px; display: flex; align-items: center; padding: 0 42px 0 35px; border: 2px solid transparent; border-radius: 8px; background: linear-gradient(#111, #111) padding-box, linear-gradient(95deg, #4299e0 20%, #ca42e0 48%, #ff5f46 80%) border-box; }
.prompt { field-sizing: content; }
.caret { width: 2px; height: 30px; margin-right: auto; background: #fff; }
.accept, .reject { height: 48px; padding: 0 18px; border-radius: 8px; font-size: 25px; }
.accept { margin-right: 16px; border: 0; background: #2f72b5; }
.reject { margin-right: 26px; border: 2px solid #e6edf2; background: none; }
.widget-title { height: 54px; display: flex; align-items: center; justify-content: space-between; padding: 4px 10px 0 10px; }
.viz { display: flex; align-items: flex-start; }
.chart { flex: 1; min-width: 0; height: auto; stroke: none; }
.chart text { fill: #131920; font: 24px "Liberation Sans", Arial, sans-serif; }
.chart .axis-title { font-weight: 700; }
.legend { position: relative; flex: none; width: 396px; height: 1238px; margin-top: 10px; overflow: hidden; font: 24px/36px "Liberation Sans", Arial, sans-serif; color: #fff; }
.legend h4 { font-weight: 700; }
.legend li { display: flex; align-items: center; gap: 10px; white-space: nowrap; }
.legend li::before { content: ""; width: 24px; height: 24px; background: #9addb4; }
.legend li:nth-child(10n+2)::before { background: #f3a4a0; }
.legend li:nth-child(10n+3)::before { background: #777; }
.legend li:nth-child(10n+4)::before { background: #b76679; }
.legend li:nth-child(10n+5)::before { background: #4a9fc8; }
.legend li:nth-child(10n+6)::before { background: #f5a900; }
.legend li:nth-child(10n+7)::before { background: #3a8551; }
.legend li:nth-child(10n+8)::before { background: #ec241a; }
.legend li:nth-child(10n+9)::before { background: #8ccae8; }
.legend li:nth-child(10n)::before { background: #f07f92; }
.legend-scroll { position: absolute; right: 0; top: 0; width: 14px; height: 1038px; border-radius: 7px; background: #080808; }
.pointer { position: absolute; left: 184px; top: 410px; width: 30px; height: 36px; }
.canvas-scroll { position: absolute; right: 1px; top: 56px; width: 8px; height: 1440px; border-radius: 4px; background: #46535e; }
.dock { position: absolute; left: 50%; bottom: 64px; transform: translateX(-50%); display: flex; align-items: center; gap: 51px; height: 96px; padding: 0 31px; border-radius: 8px; background: #3273b5; color: #fff; box-shadow: 0 8px 16px rgba(0, 0, 0, .12); }
.dock svg { stroke-width: 1.6; }
.dock i { width: 2px; height: 32px; margin: 0 -17px; background: #20507f; }
.faded { color: #8bb4dc; }

/* Widget settings */
.config { flex: none; width: 601px; display: flex; border-left: 2px solid #46484a; background: #111; padding: 30px 16px 0 31px; }
.config-main { flex: 1; min-width: 0; display: flex; flex-direction: column; }
.config section { position: relative; flex: none; padding: 16px 0 35px; border-bottom: 2px solid #464646; }
.config section:first-child { padding: 0 0 28px; }
.row { display: flex; align-items: center; height: 64px; padding: 2px 18px 0 0; }
.row h2 { flex: 1; }
.row .bare + .bare { margin-left: 44px; }
.link-row { padding-right: 0; }
.link-row a { color: #4f98e4; font-size: 25px; }
.checks { display: flex; align-items: center; gap: 32px; height: 56px; }
.checks label { display: flex; align-items: center; gap: 16px; }
.checks input { appearance: none; width: 32px; height: 32px; margin: 0; display: grid; place-items: center; border: 2px solid #6c7780; border-radius: 8px; }
.checks input:checked { background: #2f72b5; border-color: #2f72b5; }
.checks input:checked::after { content: ""; width: 8px; height: 15px; border: solid #4d5560; border-width: 0 3px 3px 0; transform: rotate(40deg) translateY(-3px); }
.select { position: relative; margin-top: 8px; display: flex; align-items: center; height: 64px; border: 2px solid #6c7780; border-radius: 8px; }
.select select { appearance: none; width: 100%; height: 100%; padding: 0 24px; border: 0; background: none; outline: 0; }
.select .muted { position: absolute; right: 15px; top: 16px; pointer-events: none; }
.bar-icon { width: 42px; height: 38px; margin-left: 24px; }
.with-icon select { padding-left: 10px; }
.field { display: flex; align-items: center; justify-content: space-between; margin-top: 8px; padding-right: 18px; }
.pill { display: flex; align-items: center; gap: 17px; width: 434px; height: 64px; padding: 0 25px; border: 0; border-radius: 8px; background: #202020; font-weight: 600; }
.num { width: 32px; font: 700 22px/32px "Noto Sans", sans-serif; text-align: center; }
.abc { display: grid; grid-template: 16px 16px / 13px 13px; justify-content: center; width: 32px; font: 700 15px/16px "Noto Sans", sans-serif; }
.abc span:first-child { grid-row: 1 / 3; align-self: center; }
.swap { position: absolute; left: 50%; bottom: -17px; transform: translateX(-50%); padding: 0 8px; background: #111; }
.config .last { flex: 1; min-height: 0; padding-bottom: 0; border: 0; overflow: hidden; }
.colors { display: flex; height: 100%; margin-top: 8px; }
.colors ul { flex: 1; }
.colors li { display: flex; align-items: center; justify-content: space-between; height: 64px; padding: 2px 14px 0 0; }
.colors i { width: 36px; height: 36px; border-radius: 8px; background: #9addb4; }
.colors li:nth-child(2) i { background: #f3a4a0; }
.colors li:nth-child(3) i { background: #919191; }
.colors li:nth-child(4) i { background: #bd6d7f; }
.colors li:nth-child(5) i { background: #35799e; }
.colors li:nth-child(6) i { background: #f5a900; }
.colors li:nth-child(7) i { background: #4aa972; }
.colors li:nth-child(8) i { background: #ec3723; }
.colors li:nth-child(9) i { background: #8ccae8; }
.track { flex: none; width: 30px; padding-top: 6px; background: #2b2b2b; border: solid #3f3f3f; border-width: 0 2px; }
.config > .track { margin-left: 16px; }
.track i { width: 16px; height: 1280px; margin: 0 auto; border-radius: 8px; background: #6b6b6b; }
.track.short i { width: 16px; height: 158px; background: #6b6b6b; }
```
FILE: chart.js
```js
// Segment fills, keyed by the letter used in the series strings.
const fills = {
  G: '#9addb4', P: '#f3a4a0', A: '#919191', M: '#bd6d7f', B: '#35799e',
  Y: '#f5a900', N: '#4aa972', R: '#ec3723', L: '#8ccae8', C: '#aa3f55'
};
const FLOOR = 1500;      // series value of the zero line
const STEP = 1.568;      // series units per pixel
const BASE = 1161;       // zero line in the drawing

// Per month: left edge, width, and the top of every stacked segment.
const months = [
  [110, 102, 'G285 P312 A314 M361 B366 Y371 N377 R383 L437 C514 G551 P574 A623 M645 B668 Y688 N718 R748 L775 C782 G823 P843 A891 M895 B930 N947 R992 L1025 C1068 G1072 P1118 A1167 M1230 B1298 Y1361 N1382 R1401 L1480 C1495'],
  [213, 98, 'G422 P444 A447 M531 Y536 R543 L591 C632 G705 P727 A753 M756 B793 Y801 N820 R846 L864 C866 G906 P916 A946 M951 B1046 Y1066 N1068 R1109 L1137 C1181 G1195 P1224 A1269 M1331 B1384 Y1419 N1449 R1462 C1496'],
  [312, 97, 'G152 P168 A170 M254 B258 Y269 N274 R281 L343 C418 G542 P571 A640 M645 B657 Y679 N725 R751 C767 G803 P818 A831 M836 B906 N935 R1012 L1039 C1074 G1077 P1128 A1194 M1231 B1314 Y1398 N1413 R1430'],
  [410, 101, 'G389 A405 Y463 N467 R475 L548 C590 G651 P740 A800 M828 B837 Y855 N868 R883 C904 G914 P951 M1013 B1073 Y1093 N1095 R1142 L1169 C1206 G1221 P1241 A1266 M1317 B1345 Y1402 N1421 R1434 C1452'],
  [513, 100, 'G119 P142 A144 M179 Y186 N223 R233 L299 C332 G419 P449 A481 M505 B538 Y571 N578 R615 C636 G662 P692 A733 M766 B825 Y859 N861 R949 L973 C1038 G1058 P1092 A1158 M1200 B1248 Y1327 N1353 R1405 L1490'],
  [614, 101, 'G82 P125 A137 M199 N201 R223 L261 C311 G378 P396 A457 M473 B500 Y523 N560 R634 C655 G670 P680 M692 B759 Y793 N807 R900 L942 C969 G983 P1048 A1072 M1173 B1286 Y1364 N1412 R1420 L1480 C1491'],
  [717, 100, 'G211 P233 A237 M293 Y303 N309 R334 L396 C477 G542 P608 A673 M684 B704 Y726 N740 R775 L782 C787 G796 P808 M828 B866 Y895 N904 R927 L956 C1002 G1008 P1035 A1102 M1209 B1303 Y1382 N1410 R1439 C1485'],
  [819, 102, 'G295 P343 A352 M386 B390 Y394 N406 R409 L486 C559 G633 P669 A723 M731 B760 Y777 N796 R849 L885 C888 G904 P922 A953 M958 B983 N993 R1026 L1031 C1074 G1088 P1110 A1165 M1209 B1251 Y1316 N1358 R1374 L1458 C1485'],
  [922, 100, 'G489 A503 M549 Y551 N556 R563 L622 C686 G731 P771 A808 M814 B858 Y870 N890 R911 L936 C940 G981 P985 A1018 M1036 B1067 N1089 R1129 L1156 G1188 P1221 A1242 M1282 B1358 Y1428 N1439 R1468 L1488 C1492'],
  [1024, 100, 'G226 A261 M315 Y318 R327 L379 C466 G519 P545 A595 M608 B649 Y656 N664 R696 L723 C726 G734 P742 A767 M775 B810 Y857 N861 R949 L982 C1040 G1046 P1080 A1127 M1225 B1319 Y1375 N1397 R1407'],
  [1126, 100, 'G265 A290 B351 N356 R362 L416 C466 G529 P590 A633 M665 B688 Y710 N762 R789 L807 C811 G843 P858 A891 M913 B953 Y971 N977 R1018 L1051 C1102 G1108 P1138 A1156 M1247 B1294 Y1397 N1427 R1450 L1490 C1494'],
  [1228, 100, 'G381 A391 M427 Y430 N446 R454 L528 C579 G665 P689 A763 M786 B800 Y814 N830 R872 L899 C911 G933 P957 M975 B999 N1033 R1057 L1083 C1102 G1110 P1156 A1167 M1247 B1359 Y1406 N1418 R1430 L1486 C1495']
];

const shapes = [];
const line = (x, y, w, h, fill = '#e8e8e8') =>
  shapes.push(`<rect x="${x}" y="${y}" width="${w}" height="${h}" fill="${fill}"/>`);
const label = (x, y, text, anchor = 'middle', extra = '') =>
  shapes.push(`<text x="${x}" y="${y}" text-anchor="${anchor}" ${extra}>${text}</text>`);

['10M', '8M', '6M', '4M', '2M', '0'].forEach((text, i) => {
  const y = [33, 259, 485, 709, 935, 1161][i];
  if (i < 5) line(109, y - 1, 1220, 2);
  line(83, y - 1, 10, 2);
  label(78, y + 8, text, 'end');
});
[[161, 'Jan 2023'], [461, 'Apr 2023'], [765, 'Jul 2023'], [1073, 'Oct 2023']].forEach(([x, text]) => {
  line(x - 1, 33, 2, 1128);
  line(x - 1, 1169, 2, 10);
  label(x, 1201, text);
});

months.forEach(([x, width, series]) => {
  const parts = series.split(' ').map(s => [s[0], Number(s.slice(1))]);
  parts.forEach(([key, top], i) => {
    const end = i + 1 < parts.length ? parts[i + 1][1] : FLOOR;
    const y = Math.round(BASE - (FLOOR - top) / STEP);
    const bottom = Math.round(BASE - (FLOOR - end) / STEP);
    shapes.push(`<rect x="${x}" y="${y}" width="${width}" height="${Math.max(1, bottom - y)}" fill="${fills[key]}"/>`);
    if (bottom - y > 4) line(x, y, width, 1, 'rgba(40,40,40,.35)');
  });
});
line(109, 1160, 1220, 2, '#999');
label(719, 1234, 'orderDate', 'middle', 'class="axis-title"');
label(0, 0, 'Sum of orderAmt', 'middle', 'class="axis-title" transform="translate(17 597) rotate(-90)"');
document.getElementById('chart').innerHTML = shapes.join('');
```
